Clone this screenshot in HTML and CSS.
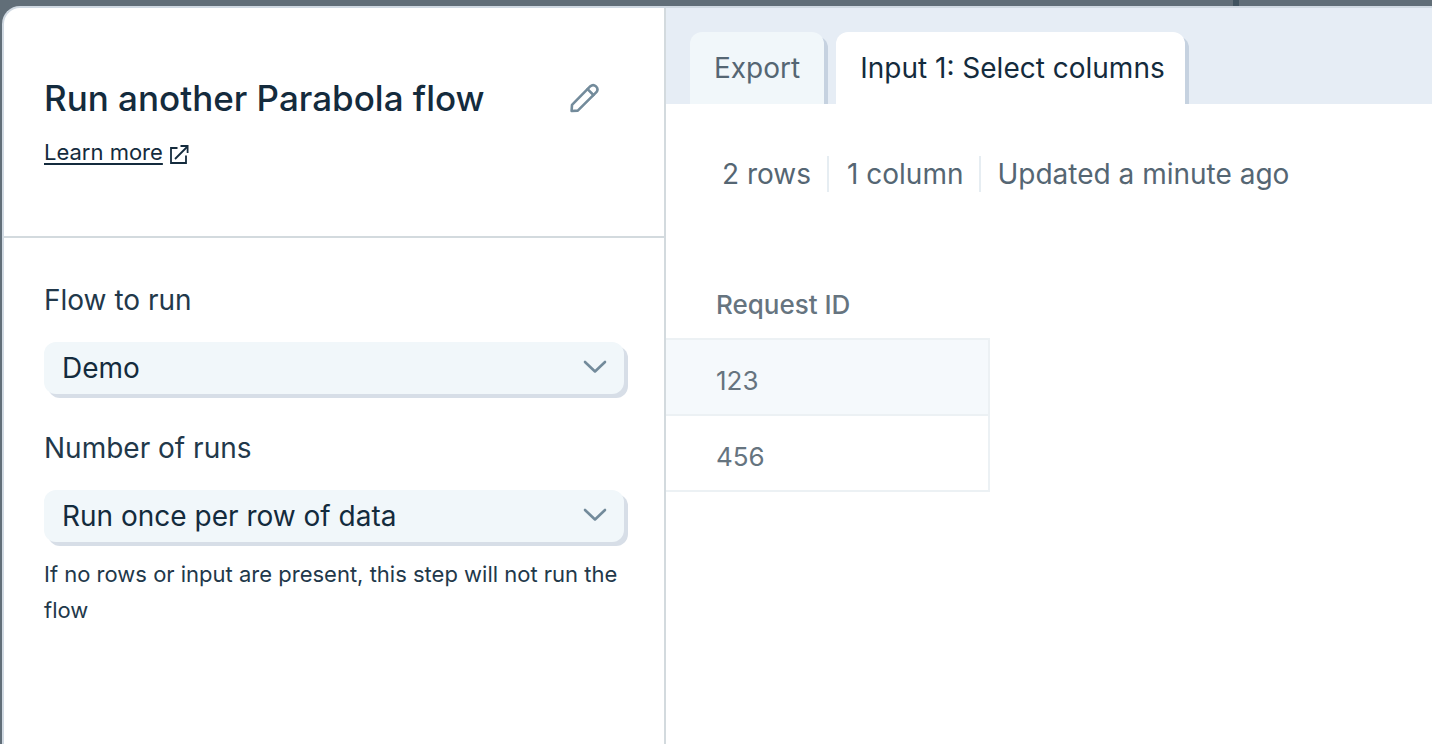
FILE: index.html
```html
<!DOCTYPE html>
<html lang="en">
<head>
<meta charset="utf-8">
<meta name="viewport" content="width=device-width, initial-scale=1">
<title>Run another Parabola flow</title>
<link rel="stylesheet" href="styles.css">
</head>
<body>
<div class="backdrop-edge"><span class="backdrop-mark"></span></div>
<div class="modal">
  <aside class="settings">
    <header class="settings-header">
      <div class="title-row">
        <h1 class="title">Run another Parabola flow</h1>
        <button class="icon-button" type="button" aria-label="Rename step">
          <svg width="30" height="30" viewBox="0 0 30 30" fill="none" stroke="#738b9b" stroke-width="2.6" stroke-linejoin="round" stroke-linecap="round"><path d="M1.6 28L2 21.8L20.4 3.2Q23.2 .8 26 3.4Q28.8 6.2 26.4 9.2L7.8 27.6Z"/><path d="M17.6 6.2L23.4 12"/></svg>
        </button>
      </div>
      <a class="learn-more" href="#"><span class="learn-text">Learn more</span><svg width="20" height="20" viewBox="0 0 20 20" fill="none" stroke="#142b3d" stroke-width="1.8"><path d="M8.5 4H2V19H17V11.5"/><path d="M6 15L18 3"/><path d="M11.5 2H18.6V9"/></svg></a>
    </header>
    <form class="fields">
      <label class="label" for="flow">Flow to run</label>
      <div class="select-box">
        <select id="flow" class="select"><option>Demo</option></select>
        <svg class="chevron" width="24" height="14" viewBox="0 0 24 14" fill="none" stroke="#738b9b" stroke-width="2.6" stroke-linecap="round" stroke-linejoin="round"><path d="M2 2L12 11.5L22 2"/></svg>
      </div>
      <label class="label" for="runs">Number of runs</label>
      <div class="select-box">
        <select id="runs" class="select"><option>Run once per row of data</option></select>
        <svg class="chevron" width="24" height="14" viewBox="0 0 24 14" fill="none" stroke="#738b9b" stroke-width="2.6" stroke-linecap="round" stroke-linejoin="round"><path d="M2 2L12 11.5L22 2"/></svg>
      </div>
      <p class="hint">If no rows or input are present, this step will not run the flow</p>
    </form>
  </aside>
  <main class="preview">
    <nav class="tabs">
      <button class="tab" type="button">Export</button>
      <button class="tab tab-active" type="button">Input 1: Select columns</button>
    </nav>
    <div class="meta">
      <span class="meta-item">2 rows</span>
      <span class="meta-item">1 column</span>
      <span class="meta-item">Updated a minute ago</span>
    </div>
    <table class="data">
      <thead><tr><th>Request ID</th></tr></thead>
      <tbody>
        <tr><td>123</td></tr>
        <tr><td>456</td></tr>
      </tbody>
    </table>
  </main>
</div>
</body>
</html>
```
FILE: styles.css
```css
* { box-sizing: border-box; }
body {
  margin: 0;
  height: 100vh;
  overflow: hidden;
  display: flex;
  flex-direction: column;
  background: #616e78;
  color: #142b3d;
  font-family: Inter, "Liberation Sans", sans-serif;
  font-size: 28px;
}
button, select { font: inherit; color: inherit; border: 0; margin: 0; }

.backdrop-edge { display: flex; justify-content: flex-end; height: 6px; }
.backdrop-mark { width: 6px; height: 6px; margin-right: 193px; background: #40535f; }

.modal {
  flex: 1;
  display: flex;
  margin-left: 2px;
  border: solid #d0d9e2;
  border-width: 2px 0 0 2px;
  border-radius: 18px 0 0 0;
  background: #fff;
  overflow: hidden;
}

.settings { flex: none; width: 662px; border-right: 2px solid #d3dade; }
.settings-header {
  height: 230px;
  padding: 66px 64px 0 40px;
  border-bottom: 2px solid #d3dade;
}
.title-row { display: flex; align-items: center; justify-content: space-between; }
.title { margin: 0; font-size: 35px; line-height: 48px; font-weight: 500; }
.icon-button { display: flex; padding: 0; background: none; }
.learn-more {
  display: inline-flex;
  align-items: center;
  gap: 6px;
  margin-top: 14px;
  color: inherit;
  font-size: 22px;
  line-height: 32px;
  text-decoration: none;
}
.learn-more svg { margin-top: 4px; }
.learn-text {
  text-decoration: underline;
  text-decoration-thickness: 2px;
  text-underline-offset: 3px;
  text-decoration-skip-ink: none;
}

.fields { display: flex; flex-direction: column; padding: 42px 40px 0; color: #22384a; }
.label { line-height: 40px; margin-bottom: 22px; }
.select-box { display: grid; align-items: center; margin-bottom: 34px; }
.select {
  grid-area: 1 / 1;
  appearance: none;
  width: 100%;
  height: 52px;
  padding: 0 60px 0 18px;
  border-radius: 12px;
  background: #f1f7fa;
  box-shadow: 4px 4px 0 #d7dee7;
  color: #142b3d;
}
.chevron { grid-area: 1 / 1; justify-self: end; margin: 0 17px 2px 0; pointer-events: none; }
.hint { margin: -20px 0 0; font-size: 22px; line-height: 36px; }

.preview { flex: 1; min-width: 0; }
.tabs {
  display: flex;
  gap: 12px;
  height: 96px;
  padding: 24px 24px 0;
  background: #e6edf5;
  overflow: hidden;
}
.tab {
  padding: 0 24px;
  border-radius: 12px 12px 0 0;
  background: #f1f7fa;
  box-shadow: 4px 4px 0 #c6d2e0;
  color: #556673;
  white-space: nowrap;
}
.tab-active { padding-right: 20px; background: #fff; color: #142b3d; }

.meta { display: flex; padding: 52px 38px 0; color: #556673; line-height: 36px; white-space: nowrap; }
.meta-item { padding: 0 16px 0 18px; }
.meta-item + .meta-item { border-left: 2px solid #e6edf2; }
.meta-item:last-child { padding-left: 16px; }

.data { margin-top: 78px; width: 324px; border-collapse: separate; border-spacing: 0; font-size: 26px; color: #66747f; }
.data th, .data td { padding: 0 50px; text-align: left; border-bottom: 2px solid #ecf1f4; }
.data th { height: 70px; font-weight: 500; }
.data td { height: 76px; padding-top: 6px; border-right: 2px solid #ecf1f4; }
.data tbody tr:nth-child(odd) { background: #f5f9fc; }
```
